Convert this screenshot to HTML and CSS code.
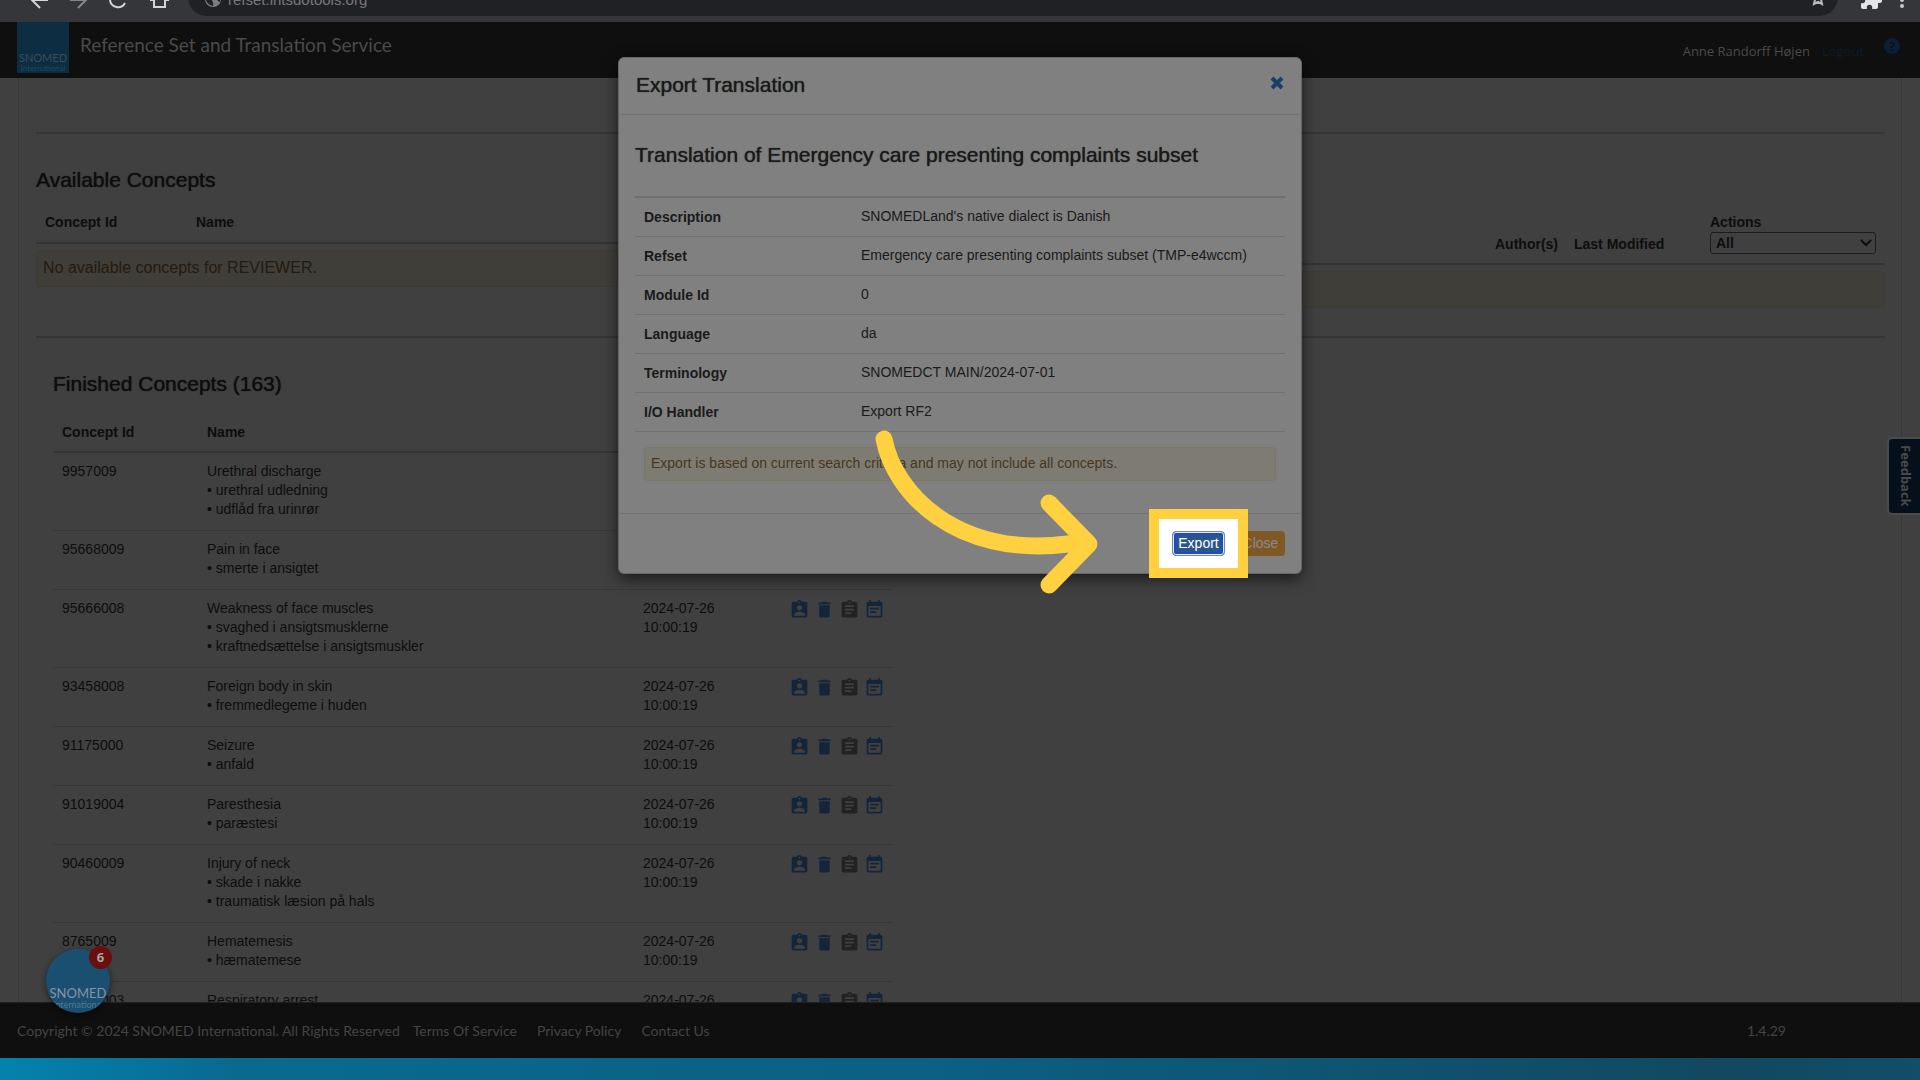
FILE: index.html
```html
<!DOCTYPE html>
<html lang="en">
<head>
<meta charset="utf-8">
<title>Reference Set and Translation Service</title>
<link rel="stylesheet" href="styles.css">
</head>
<body>
<svg class="sprite" aria-hidden="true">
  <symbol id="i-assign" viewBox="0 0 24 24"><path d="M19 3h-4.18C14.4 1.84 13.3 1 12 1c-1.3 0-2.4.84-2.82 2H5c-1.1 0-2 .9-2 2v14c0 1.100.9 2 2 2h14c1.100 0 2-.9 2-2V5c0-1.100-.9-2-2-2zm-7 0c.55 0 1 .45 1 1s-.45 1-1 1-1-.45-1-1 .45-1 1-1zm0 4c1.660 0 3 1.340 3 3s-1.340 3-3 3-3-1.340-3-3 1.340-3 3-3zm6 12H6v-1.400c0-2 4-3.100 6-3.100s6 1.100 6 3.100V19z"/></symbol>
  <symbol id="i-delete" viewBox="0 0 24 24"><path d="M6 19c0 1.100.9 2 2 2h8c1.100 0 2-.9 2-2V7H6v12zM19 4h-3.500l-1-1h-5l-1 1H5v2h14V4z"/></symbol>
  <symbol id="i-note" viewBox="0 0 24 24"><path d="M19 3h-4.180C14.400 1.840 13.300 1 12 1c-1.300 0-2.400.84-2.820 2H5c-1.100 0-2 .9-2 2v14c0 1.100.9 2 2 2h14c1.100 0 2-.9 2-2V5c0-1.100-.9-2-2-2zm-7 0c.55 0 1 .45 1 1s-.45 1-1 1-1-.45-1-1 .45-1 1-1zm2 14H7v-2h7v2zm3-4H7v-2h10v2zm0-4H7V7h10v2z"/></symbol>
  <symbol id="i-event" viewBox="0 0 24 24"><path d="M17 10H7v2h10v-2zm2-7h-1V1h-2v2H8V1H6v2H5c-1.110 0-2 .9-2 2v14c0 1.100.89 2 2 2h14c1.100 0 2-.9 2-2V5c0-1.100-.9-2-2-2zm0 16H5V8h14v11zm-5-5H7v2h7v-2z"/></symbol>
</svg>

<div class="browser">
  <div class="nav-icons">
    <svg viewBox="0 0 150 22" width="150" height="22" fill="none" stroke="#d4d5d8" stroke-width="2">
      <path d="M48 0H32M40 8l-9-9"/><path d="M70 0h16M78 8l9-9" stroke="#85868a"/>
      <path d="M110 0a8 8 0 0 0 15 3"/>
    </svg>
    <svg viewBox="0 0 22 22" width="22" height="22" fill="none" stroke="#d4d5d8" stroke-width="2"><path d="M4 -2v9h11v-9M0 0h5M14 0h5"/></svg>
  </div>
  <div class="address">
    <svg viewBox="0 0 18 18" width="18" height="18"><circle cx="9" cy="9" r="8" fill="#7c7e82"/><path d="M2 7c4 0 6 1 6 3s2 2 1 6C5 15 1 12 2 7zM9 2c0 3 3 2 2 4s2 3 3 5l2 1c1-4-1-9-7-10z" fill="#202124"/></svg>
    <span>refset.ihtsdotools.org</span>
    <svg class="star" viewBox="0 0 16 16" width="16" height="16" fill="none" stroke="#b9babd" stroke-width="2"><path d="M8 2l2 4 4 .5-3 3 1 4.500-4-2.200L4 14l1-4.500-3-3L6 6z"/></svg>
  </div>
  <svg class="ext" viewBox="0 0 24 24" width="24" height="24" fill="#e4e5e8"><path d="M20.500 11H19V7c0-1.100-.9-2-2-2h-4V3.500a2.500 2.500 0 0 0-5 0V5H4c-1.100 0-2 .9-2 2v3.800h1.500a2.700 2.700 0 0 1 0 5.400H2V20c0 1.100.9 2 2 2h3.800v-1.500a2.700 2.700 0 0 1 5.400 0V22H17c1.100 0 2-.9 2-2v-4h1.500a2.500 2.500 0 0 0 0-5z"/></svg>
  <svg class="dots" viewBox="0 0 6 22" width="6" height="22" fill="#c9cacd"><circle cx="3" cy="0" r="2"/><circle cx="3" cy="6" r="2"/></svg>
</div>

<header class="topbar">
  <div class="logo"><b>SNOMED</b><small>International</small></div>
  <h1>Reference Set and Translation Service</h1>
  <div class="user"><span>Anne Randorff Højen</span><a href="#">Logout</a></div>
  <a class="help" href="#" aria-label="Help">?</a>
</header>

<main class="content">
  <div class="panel">
    <section class="available">
      <h2>Available Concepts</h2>
      <div class="split">
        <div class="pane">
          <table class="grid avail-left">
            <thead><tr><th class="c-id">Concept Id</th><th>Name</th></tr></thead>
          </table>
          <p class="notice">No available concepts for REVIEWER.</p>
        </div>
        <div class="pane">
          <table class="grid avail-right">
            <thead><tr><th></th><th class="c-author">Author(s)</th><th class="c-mod">Last Modified</th>
            <th class="c-act"><label for="actions">Actions</label>
              <span class="pick"><select id="actions"><option>All</option></select><svg viewBox="0 0 12 8" width="12" height="8"><path d="M1 1l5 5 5-5" fill="none" stroke="#0d0d0d" stroke-width="2"/></svg></span></th></tr></thead>
          </table>
          <p class="notice"></p>
        </div>
      </div>
    </section>
    <section class="finished">
      <h2>Finished Concepts (163)</h2>
      <table class="grid list">
        <thead><tr><th class="c-id">Concept Id</th><th>Name</th><th class="c-date"></th><th class="c-icons"></th></tr></thead>
        <tbody id="rows"></tbody>
      </table>
    </section>
  </div>
</main>

<footer class="footer">
  <span>Copyright © 2024 SNOMED International. All Rights Reserved</span>
  <nav><a href="#">Terms Of Service</a><a href="#">Privacy Policy</a><a href="#">Contact Us</a></nav>
  <span class="version">1.4.29</span>
</footer>
<div class="desktop"></div>

<button class="feedback" type="button">Feedback</button>
<button class="chat" type="button" aria-label="SNOMED resource center"><span class="disc"><b>SNOMED</b><small>International</small></span><span class="count">6</span></button>

<div class="modal" role="dialog" aria-labelledby="modal-title">
  <div class="modal-head">
    <h2 id="modal-title">Export Translation</h2>
    <button class="x" type="button" aria-label="Close dialog"><svg viewBox="0 0 14 14" width="14" height="14"><path d="M2 2l10 10M12 2L2 12" stroke="#1c3f66" stroke-width="4"/></svg></button>
  </div>
  <div class="modal-body">
    <h2>Translation of Emergency care presenting complaints subset</h2>
    <table class="facts">
      <tr><th>Description</th><td>SNOMEDLand's native dialect is Danish</td></tr>
      <tr><th>Refset</th><td>Emergency care presenting complaints subset (TMP-e4wccm)</td></tr>
      <tr><th>Module Id</th><td>0</td></tr>
      <tr><th>Language</th><td>da</td></tr>
      <tr><th>Terminology</th><td>SNOMEDCT MAIN/2024-07-01</td></tr>
      <tr><th>I/O Handler</th><td>Export RF2</td></tr>
    </table>
    <p class="warn">Export is based on current search criteria and may not include all concepts.</p>
  </div>
  <div class="modal-foot">
    <span class="spot"><button class="btn export" type="button">Export</button></span>
    <button class="btn close" type="button">Close</button>
  </div>
  <svg class="arrow" viewBox="870 425 235 175" width="235" height="175" fill="none" stroke="#ffd040" stroke-width="17" stroke-linecap="round" stroke-linejoin="round"><path d="M884 439C894 492 955 558 1068 544h20M1049 503l40 41-40 41"/></svg>
</div>
<script src="app.js"></script>
</body>
</html>
```

FILE: app.js
```js
const concepts = [
  ["9957009", "Urethral discharge", "urethral udledning", "udflåd fra urinrør"],
  ["95668009", "Pain in face", "smerte i ansigtet"],
  ["95666008", "Weakness of face muscles", "svaghed i ansigtsmusklerne", "kraftnedsættelse i ansigtsmuskler"],
  ["93458008", "Foreign body in skin", "fremmedlegeme i huden"],
  ["91175000", "Seizure", "anfald"],
  ["91019004", "Paresthesia", "paræstesi"],
  ["90460009", "Injury of neck", "skade i nakke", "traumatisk læsion på hals"],
  ["8765009", "Hematemesis", "hæmatemese"],
  ["87317003", "Respiratory arrest"]
];
const icon = (name, label) =>
  `<button class="icon ${name}" type="button" aria-label="${label}"><svg viewBox="0 0 24 24"><use href="#i-${name}"/></svg></button>`;
document.getElementById("rows").innerHTML = concepts.map(([id, name, ...terms]) => `
  <tr><td>${id}</td>
  <td>${name}${terms.map(t => `<br>• ${t}`).join("")}</td>
  <td>2024-07-26<br>10:00:19</td>
  <td><div class="icons">${icon("assign", "Assign")}${icon("delete", "Remove")}${icon("note", "Notes")}${icon("event", "History")}</div></td></tr>`).join("");
```

FILE: styles.css
```css
* { box-sizing: border-box; }
body {
  margin: 0;
  height: 100vh;
  display: flex;
  flex-direction: column;
  position: relative;
  overflow: hidden;
  background: #404040;
  color: #0d0d0d;
  font: 14px/19px "Liberation Sans", Arial, sans-serif;
}
h1, h2, p { margin: 0; }
h2 { font-size: 21px; line-height: 24px; font-weight: 500; text-shadow: 0 0 1px currentColor; }
a { color: inherit; text-decoration: none; }
button { font: inherit; border: 0; padding: 0; background: none; color: inherit; }
.sprite { display: none; }

/* Browser chrome */
.browser {
  flex: 0 0 22px;
  display: flex;
  align-items: flex-start;
  background: #35363a;
  overflow: hidden;
}
.nav-icons { flex: 0 0 188px; display: flex; }
.address {
  flex: 1;
  height: 38px;
  margin: -22px 11px 0 0;
  padding: 12px 12px 0 16px;
  display: flex;
  align-items: flex-start;
  gap: 6px;
  border-radius: 19px;
  background: #202124;
  color: #77787b;
  font-size: 15px;
  line-height: 20px;
}
.star { margin-left: auto; }
.ext { margin: -13px 0 0 10px; }
.dots { margin: 0 15px 0 16px; }

/* Header */
.topbar {
  flex: 0 0 56px;
  display: flex;
  align-items: flex-start;
  padding: 0 20px 0 17px;
  background: #0f0f0f;
  color: #4a4a4a;
  font-family: "Open Sans", sans-serif;
}
.logo {
  width: 52px;
  height: 51px;
  padding-top: 29px;
  background: #0c2d42;
  text-align: center;
  font-family: Lato, sans-serif;
  color: #3c4c56;
}
.logo b, .logo small, .disc b, .disc small { display: block; font-weight: 400; }
.logo b { font-size: 11px; line-height: 13px; }
.logo small { font-size: 8px; line-height: 8px; color: #24465c; }
.topbar h1 { margin: 11px auto 0 11px; font: 19px/24px Lato, sans-serif; }
.user { display: flex; gap: 12px; margin-top: 19px; font-size: 13px; line-height: 20px; }
.user a { color: #0c1a2a; }
.help {
  width: 16px;
  height: 16px;
  margin: 16px 0 0 20px;
  border-radius: 50%;
  background: #0c1f36;
  color: #0f0f0f;
  font-size: 13px;
  line-height: 16px;
  font-weight: 700;
  text-align: center;
}

/* Page */
.content { flex: 1; min-height: 0; overflow: hidden; padding: 0 18px; }
.panel { padding: 54px 16px 0 17px; border: 1px solid #373737; border-width: 0 1px; }
.available { height: 206px; border-top: 2px solid #353535; border-bottom: 2px solid #353535; padding-top: 34px; }
.split { display: grid; grid-template-columns: 1fr 1fr; margin-top: 19px; }
.grid { width: 100%; border-collapse: separate; border-spacing: 0; table-layout: fixed; }
.grid th { text-align: left; padding: 0 9px; font-weight: 700; vertical-align: bottom; }
.grid td { vertical-align: top; padding: 9px 9px 11px; border-bottom: 1px solid #373737; }
.avail-left th { height: 33px; padding-bottom: 10px; border-bottom: 2px solid #343434; }
.avail-left .c-id { width: 151px; }
.avail-right th { height: 54px; padding-bottom: 9px; border-bottom: 2px solid #343434; }
.avail-right .c-author { width: 79px; }
.avail-right .c-mod { width: 136px; }
.avail-right .c-act { width: 184px; }
.c-act label { display: block; line-height: 20px; }
.pick { display: flex; align-items: center; position: relative; height: 22px; }
.pick select {
  width: 100%;
  height: 22px;
  appearance: none;
  padding: 0 5px;
  border: 1px solid #1c1c1c;
  border-radius: 3px;
  background: #404040;
  color: #0d0d0d;
  font: 700 14px/20px "Liberation Sans", Arial, sans-serif;
}
.pick svg { position: absolute; right: 4px; }
.notice {
  height: 37px;
  margin-top: 6px;
  padding: 7px 6px;
  border: 1px solid #3f3b33;
  border-radius: 4px;
  background: #3f3e39;
  color: #231b0f;
  font-size: 16px;
  line-height: 20px;
}
.finished { padding: 34px 0 0 17px; }
.list { width: 840px; margin-top: 17px; }
.list th { height: 40px; padding-bottom: 9px; border-bottom: 2px solid #343434; }
.list .c-id { width: 145px; }
.list .c-date { width: 146px; }
.list .c-icons { width: 113px; }
.icons { display: flex; gap: 4px; }
.icon { width: 21px; height: 21px; color: #13253b; }
.icon svg { display: block; width: 21px; height: 21px; fill: currentColor; }
.icon.note { color: #222; }

/* Footer */
.footer {
  flex: 0 0 56px;
  display: flex;
  align-items: center;
  gap: 13px;
  padding: 0 134px 0 17px;
  border-top: 1px solid #202020;
  background: #0f0f0f;
  color: #444;
  font: 14px/20px Lato, sans-serif;
}
.footer nav { display: flex; gap: 20px; }
.version { margin-left: auto; }
.desktop { flex: 0 0 22px; background: linear-gradient(90deg, #0482ae, #096a90 12%, #0b5f82 50%, #124860 90%, #124d69); }

/* Floating widgets */
.feedback {
  position: absolute;
  right: 0;
  top: 437px;
  width: 33px;
  height: 78px;
  padding: 0 5px 0 8px;
  border: 2px solid #4b4b4b;
  border-right: 0;
  border-radius: 5px 0 0 5px;
  background: #060f1c;
  color: #4a4a4a;
  font: 700 13px/18px "Noto Sans", sans-serif;
  writing-mode: vertical-rl;
  text-align: center;
}
.chat { position: absolute; left: 46px; bottom: 67px; width: 64px; height: 64px; }
.disc {
  display: block;
  width: 64px;
  height: 64px;
  padding-top: 37px;
  border-radius: 50%;
  overflow: hidden;
  background: #1b4f72;
  box-shadow: 0 2px 6px #0008;
  color: #8295a3;
  font-family: Lato, sans-serif;
}
.disc b { font-size: 13px; line-height: 15px; }
.disc small { font-size: 9px; line-height: 8px; color: #53788f; }
.count {
  position: absolute;
  top: -3px;
  right: -2px;
  width: 23px;
  height: 23px;
  border-radius: 50%;
  background: #6b0e0e;
  color: #a5a5a5;
  font: 700 13px/23px "Open Sans", sans-serif;
}

/* Export dialog */
.modal {
  position: absolute;
  top: 57px;
  left: 50%;
  width: 684px;
  margin-left: -342px;
  border: 1px solid #666;
  border-radius: 6px;
  background: #808080;
  box-shadow: 0 5px 15px #0009;
  color: #1a1a1a;
}
.modal-head { display: flex; justify-content: space-between; align-items: flex-start; height: 57px; padding: 15px 16px 0 17px; border-bottom: 1px solid #737373; }
.modal-head .x { width: 16px; height: 24px; }
.modal-body { padding: 28px 16px 32px; border-bottom: 1px solid #737373; }
.facts { width: 100%; margin-top: 29px; border-collapse: separate; border-spacing: 0; border-top: 2px solid #6f6f6f; }
.facts th, .facts td { height: 39px; padding: 9px; border-bottom: 1px solid #707070; text-align: left; vertical-align: top; }
.facts th { width: 217px; padding: 10px 9px 8px; }
.warn {
  margin: 15px 9px 0;
  padding: 5px 6px 6px;
  border: 1px solid #7d7666;
  border-radius: 4px;
  background: #7e7c72;
  color: #45371e;
  line-height: 21px;
}
.modal-foot { display: flex; justify-content: flex-end; gap: 11px; padding: 17px 16px; }
.spot { position: relative; z-index: 1; }
.spot::before { content: ""; position: absolute; inset: -22px -23px; border: 10px solid #ffd040; background: #fff; }
.btn { display: block; position: relative; height: 25px; border-radius: 4px; color: #fff; }
.export { width: 53px; border: 1px solid #7288a4; background: #2b568a; box-shadow: inset 0 0 0 1px #e3e9f5, inset 0 0 0 3px #2049c9; }
.close { width: 49px; background: #7f5825; color: #8c8c8c; }
.arrow { position: absolute; left: 251px; top: 367px; z-index: 2; }
```
